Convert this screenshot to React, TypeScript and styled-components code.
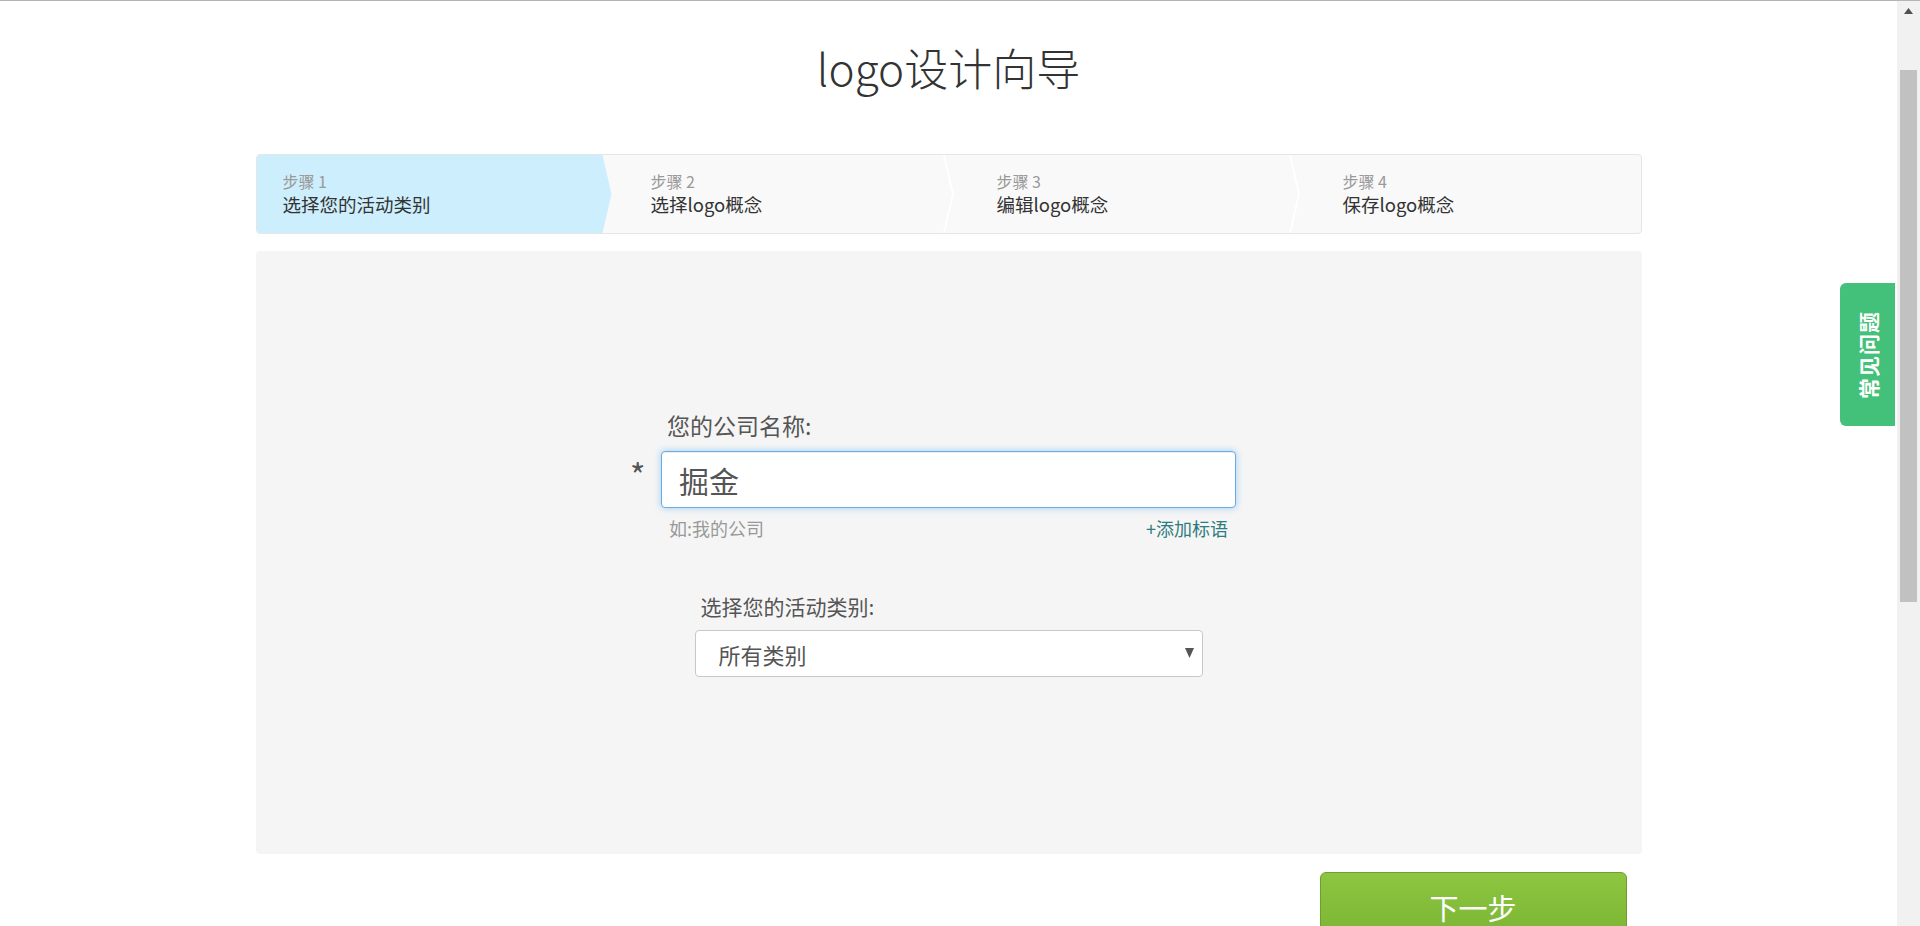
import React from "react";
import styled, { createGlobalStyle } from "styled-components";

const GlobalStyle = createGlobalStyle`
  html, body {
    margin: 0;
    padding: 0;
    height: 100%;
    overflow: hidden;
    background: #ffffff;
  }
  body {
    border-top: 1px solid #b4b4b4;
    box-sizing: border-box;
    font-family: "Noto Sans CJK SC", "Noto Sans", sans-serif;
  }
  * { box-sizing: border-box; }
`;

const FONT = `"Noto Sans CJK SC", "Noto Sans", sans-serif`;

const Shell = styled.div`
  display: flex;
  height: calc(100vh - 1px);
`;

const Page = styled.main`
  flex: 1;
  min-width: 0;
  overflow: hidden;
  padding-top: 36px;
  font-family: ${FONT};
`;

const ScrollTrack = styled.div`
  width: 23px;
  flex-shrink: 0;
  background: #f1f1f1;
  display: flex;
  flex-direction: column;
  align-items: center;
`;

const ScrollArrow = styled.svg`
  width: 9px;
  height: 6px;
  margin-top: 7px;
`;

const ScrollThumb = styled.div<{ $top: number; $length: number }>`
  width: 17px;
  margin-top: ${(p) => p.$top}px;
  height: ${(p) => p.$length}px;
  background: #c1c1c1;
`;

const Title = styled.h1`
  margin: 0;
  text-align: center;
  font-size: 44px;
  line-height: 60px;
  font-weight: 300;
  color: #333333;
`;

const Container = styled.div`
  width: 1386px;
  margin: 57px auto 0;
`;

const StepBar = styled.div`
  display: grid;
  grid-template-columns: repeat(4, 1fr);
  height: 80px;
  border: 1px solid #e6e6e6;
  border-radius: 4px;
  background: #f9f9f9;
  overflow: hidden;
`;

const Step = styled.div<{ $active?: boolean; $first?: boolean }>`
  position: relative;
  min-width: 0;
  display: flex;
  flex-direction: column;
  justify-content: center;
  padding-left: ${(p) => (p.$first ? "26px" : "48px")};
  z-index: ${(p) => (p.$active ? 2 : 1)};
  &::before {
    content: "";
    display: ${(p) => (p.$active ? "block" : "none")};
    position: absolute;
    left: 0;
    top: 0;
    bottom: 0;
    right: -9px;
    background: #cdeefc;
    clip-path: polygon(0 0, calc(100% - 9px) 0, 100% 50%, calc(100% - 9px) 100%, 0 100%);
    z-index: -1;
  }
`;

const StepNo = styled.span`
  display: block;
  font-size: 16px;
  line-height: 21px;
  color: #999999;
`;

const StepName = styled.span`
  display: block;
  font-size: 18.5px;
  line-height: 25px;
  color: #333333;
`;

const Separator = styled.svg`
  position: absolute;
  right: -5px;
  top: 0;
  width: 11px;
  height: 78px;
`;

const FormBox = styled.div`
  margin-top: 17px;
  height: 603px;
  background: #f5f5f5;
  border-radius: 4px;
  padding-top: 159px;
  display: flex;
  flex-direction: column;
  align-items: center;
`;

const Field = styled.div<{ $width: number; $gap?: number }>`
  width: ${(p) => p.$width}px;
  margin-top: ${(p) => p.$gap ?? 0}px;
`;

const FieldLabel = styled.label<{ $size: number; $line: number; $after: number }>`
  display: block;
  padding-left: 6px;
  margin-bottom: ${(p) => p.$after}px;
  font-size: ${(p) => p.$size}px;
  line-height: ${(p) => p.$line}px;
  color: #555555;
`;

const InputWrap = styled.div`
  position: relative;
`;

const Required = styled.span`
  position: absolute;
  left: -31px;
  top: 7px;
  font-size: 33px;
  line-height: 33px;
  color: #555555;
`;

const TextInput = styled.input`
  display: block;
  width: 100%;
  height: 57px;
  padding: 0 17px;
  font-family: ${FONT};
  font-size: 30px;
  color: #555555;
  background: #ffffff;
  border: 1px solid #66afe9;
  border-radius: 4px;
  outline: none;
  box-shadow: inset 0 1px 1px rgba(0, 0, 0, 0.075), 0 0 7px rgba(102, 175, 233, 0.6);
`;

const HintRow = styled.div`
  display: flex;
  justify-content: space-between;
  margin-top: 8px;
  padding: 0 8px;
  font-size: 18px;
  line-height: 24px;
`;

const Hint = styled.span`
  color: #999999;
`;

const AddLink = styled.a`
  color: #2f7c80;
  text-decoration: none;
  cursor: pointer;
`;

const SelectWrap = styled.div`
  position: relative;
`;

const Select = styled.select`
  display: block;
  width: 100%;
  height: 47px;
  padding: 0 0 0 23px;
  font-family: ${FONT};
  font-size: 22px;
  color: #555555;
  background: #ffffff;
  border: 1px solid #c8c8c8;
  border-radius: 4px;
  appearance: none;
  -webkit-appearance: none;
  outline: none;
`;

const Caret = styled.svg`
  position: absolute;
  right: 9px;
  top: 18px;
  width: 9px;
  height: 10px;
  pointer-events: none;
`;

const ButtonRow = styled.div`
  display: flex;
  justify-content: flex-end;
  padding-right: 15px;
  margin-top: 18px;
`;

const NextButton = styled.button`
  width: 307px;
  height: 70px;
  border: 1px solid #6d9f2c;
  border-radius: 6px;
  background: linear-gradient(to bottom, #8dc640 0%, #7ab433 100%);
  color: #ffffff;
  font-family: ${FONT};
  font-size: 29px;
  line-height: 1;
  cursor: pointer;
`;

const SideTab = styled.a`
  position: fixed;
  top: 283px;
  right: 25px;
  width: 55px;
  height: 143px;
  background: #43c079;
  border-radius: 6px 0 0 6px;
  display: flex;
  align-items: center;
  justify-content: center;
  text-decoration: none;
  cursor: pointer;
`;

const SideTabText = styled.span`
  display: block;
  transform: rotate(-90deg);
  white-space: nowrap;
  font-family: ${FONT};
  font-size: 21px;
  letter-spacing: 1px;
  font-weight: 700;
  color: #ffffff;
`;

const steps = [
  { no: "步骤 1", name: "选择您的活动类别" },
  { no: "步骤 2", name: "选择logo概念" },
  { no: "步骤 3", name: "编辑logo概念" },
  { no: "步骤 4", name: "保存logo概念" },
];

export default function App() {
  return (
    <>
      <GlobalStyle />
      <Shell>
        <Page>
          <Title>logo设计向导</Title>
          <Container>
            <StepBar>
              {steps.map((s, i) => (
                <Step key={s.no} $active={i === 0} $first={i === 0}>
                  <StepNo>{s.no}</StepNo>
                  <StepName>{s.name}</StepName>
                  {i > 0 && i < steps.length - 1 && (
                    <Separator viewBox="0 0 11 78" preserveAspectRatio="none">
                      <polyline
                        points="1,0 10,39 1,78"
                        fill="none"
                        stroke="#ffffff"
                        strokeWidth="2"
                      />
                    </Separator>
                  )}
                </Step>
              ))}
            </StepBar>

            <FormBox>
              <Field $width={575}>
                <FieldLabel $size={23} $line={30} $after={11}>
                  您的公司名称:
                </FieldLabel>
                <InputWrap>
                  <Required>*</Required>
                  <TextInput defaultValue="掘金" />
                </InputWrap>
                <HintRow>
                  <Hint>如:我的公司</Hint>
                  <AddLink>+添加标语</AddLink>
                </HintRow>
              </Field>

              <Field $width={508} $gap={52}>
                <FieldLabel $size={21} $line={28} $after={10}>
                  选择您的活动类别:
                </FieldLabel>
                <SelectWrap>
                  <Select defaultValue="all">
                    <option value="all">所有类别</option>
                  </Select>
                  <Caret viewBox="0 0 9 10">
                    <polygon points="0,0 9,0 4.5,10" fill="#555555" />
                  </Caret>
                </SelectWrap>
              </Field>
            </FormBox>

            <ButtonRow>
              <NextButton>下一步</NextButton>
            </ButtonRow>
          </Container>
        </Page>
        <ScrollTrack>
          <ScrollArrow viewBox="0 0 9 6">
            <polygon points="4.5,0 9,6 0,6" fill="#505050" />
          </ScrollArrow>
          <ScrollThumb $top={56} $length={532} />
        </ScrollTrack>
        <SideTab>
          <SideTabText>常见问题</SideTabText>
        </SideTab>
      </Shell>
    </>
  );
}
